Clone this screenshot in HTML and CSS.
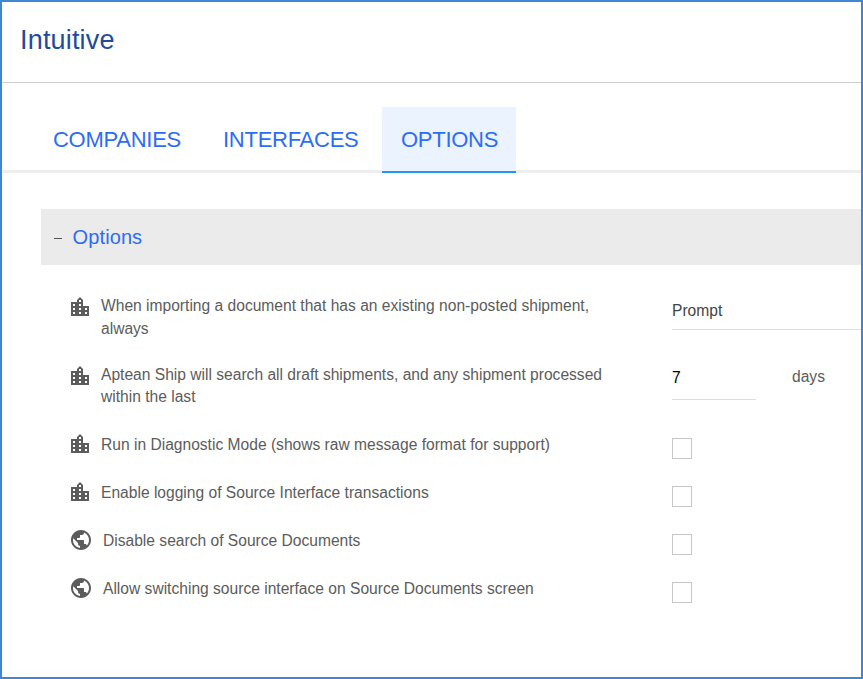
FILE: index.html
```html
<!DOCTYPE html>
<html lang="en">
<head>
<meta charset="utf-8">
<title>Intuitive</title>
<link rel="stylesheet" href="styles.css">
</head>
<body>
<svg class="defs" width="0" height="0">
  <symbol id="company" viewBox="0 0 24 24"><path fill-rule="evenodd" d="M15 11V5l-3-3-3 3v2H3v14h18V11h-6zm-8 8H5v-2h2v2zm0-4H5v-2h2v2zm0-4H5V9h2v2zm6 8h-2v-2h2v2zm0-4h-2v-2h2v2zm0-4h-2V9h2v2zm0-4h-2V5h2v2zm6 12h-2v-2h2v2zm0-4h-2v-2h2v2z"/></symbol>
  <symbol id="globe" viewBox="2 2 20 20"><path d="M12 2C6.480 2 2 6.480 2 12s4.480 10 10 10 10-4.480 10-10S17.520 2 12 2zm-1 17.930c-3.950-.490-7-3.850-7-7.930 0-.620.080-1.210.210-1.790L9 15v1c0 1.100.900 2 2 2v1.930zm6.900-2.540c-.260-.810-1-1.390-1.900-1.390h-1v-3c0-.550-.450-1-1-1H8v-2h2c.550 0 1-.450 1-1V7h2c1.100 0 2-.900 2-2v-.410c2.930 1.190 5 4.060 5 7.410 0 2.080-.800 3.970-2.100 5.390z"/></symbol>
</svg>
<div class="window">
  <header class="header"><h1>Intuitive</h1></header>
  <nav class="tabs">
    <a class="tab companies">COMPANIES</a>
    <a class="tab interfaces">INTERFACES</a>
    <a class="tab active">OPTIONS</a>
  </nav>
  <main>
    <div class="section"><i class="minus"></i><h2>Options</h2></div>
    <div class="row first">
      <svg class="icon"><use href="#company"/></svg>
      <label>When importing a document that has an existing non-posted shipment,<br>always</label>
      <div class="select">Prompt</div>
    </div>
    <div class="row second">
      <svg class="icon"><use href="#company"/></svg>
      <label>Aptean Ship will search all draft shipments, and any shipment processed<br>within the last</label>
      <div class="number">7</div><span class="unit">days</span>
    </div>
    <div class="row"><svg class="icon"><use href="#company"/></svg><label>Run in Diagnostic Mode (shows raw message format for support)</label><i class="box"></i></div>
    <div class="row"><svg class="icon"><use href="#company"/></svg><label>Enable logging of Source Interface transactions</label><i class="box"></i></div>
    <div class="row global"><svg class="icon"><use href="#globe"/></svg><label>Disable search of Source Documents</label><i class="box"></i></div>
    <div class="row global"><svg class="icon"><use href="#globe"/></svg><label>Allow switching source interface on Source Documents screen</label><i class="box"></i></div>
  </main>
</div>
</body>
</html>
```
FILE: styles.css
```css
* { box-sizing: border-box; }
body { margin: 0; font-family: "Liberation Sans", Arial, sans-serif; background: #fff; }
.defs { display: none; }
.window { width: 863px; height: 679px; border: 2px solid #3d87d4; overflow: hidden; }
.header { height: 81px; border-bottom: 1px solid #d0d0d0; padding: 21px 18px 0; }
h1 { margin: 0; font-size: 27px; line-height: 34px; letter-spacing: .18px; font-weight: 400; color: #1f4b9f; }
.tabs { display: flex; height: 90px; padding: 24px 0 0 32px; border-bottom: 3px solid #eee; }
.tab { height: 66px; padding: 0 19px; font-size: 22px; letter-spacing: -.27px; line-height: 65px; color: #2d6cf6; white-space: nowrap; }
.companies { width: 170px; }
.interfaces { width: 178px; }
.active { width: 134px; background: #ebf3fe; border-bottom: 2px solid #2196f3; }
main { padding: 36px 0 0 39px; }
.section { display: flex; align-items: center; height: 56px; padding-left: 13px; background: #ebebeb; }
.minus { width: 8px; height: 1px; background: #555; margin: 2px 10.600px 0 0; }
h2 { margin: 0; font-size: 20px; letter-spacing: .1px; font-weight: 400; color: #2d6cf6; }
.row { display: flex; align-items: flex-start; height: 48px; padding-left: 28px; font-size: 15.600px; line-height: 22px; color: #5c5c5c; }
.first { height: 99px; padding-top: 30px; }
.first label { margin-top: -1px; line-height: 23px; }
.second { height: 70px; }
.icon { width: 24px; height: 24px; margin: -2px 9px 0 -1px; fill: #5c5c5c; flex: none; }
.first .icon, .second .icon { margin-top: 0; }
label { width: 571px; flex: none; white-space: nowrap; }
.global label { width: 569px; }
.global .icon { width: 20px; height: 20px; margin: 0 12px 0 2px; }
.select { flex: 1; height: 35px; padding-top: 5px; border-bottom: 1px solid #dedede; color: #444; }
.number { width: 84px; height: 36px; padding-top: 3px; border-bottom: 1px solid #dedede; color: #000; }
.unit { margin: 2px 0 0 36px; }
.box { width: 20px; height: 21px; margin-top: 4px; border: 1px solid #c8c8c8; }
```
